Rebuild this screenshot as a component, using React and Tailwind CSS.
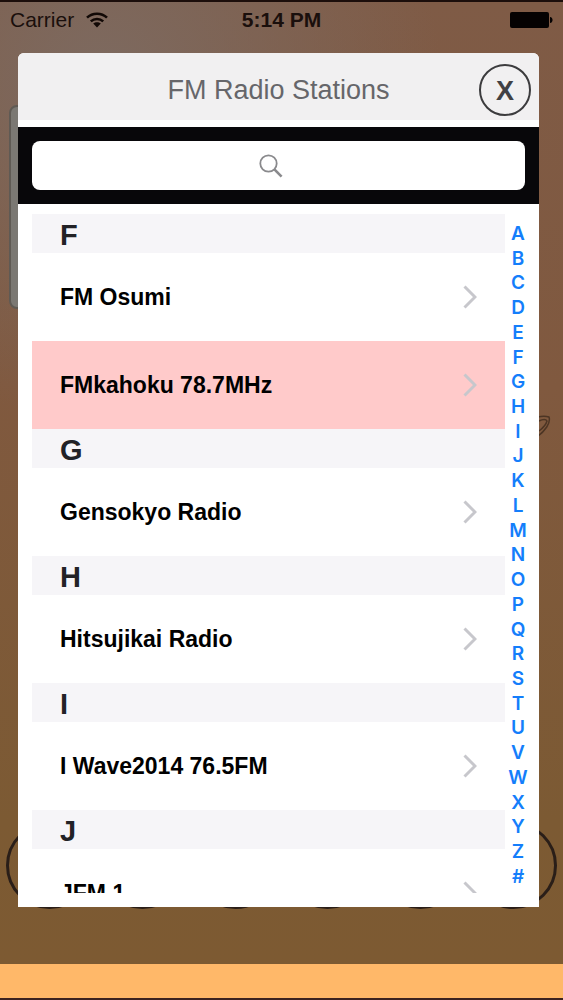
import React from "react";

const sections = [
  { letter: "F", stations: ["FM Osumi", "FMkahoku 78.7MHz"] },
  { letter: "G", stations: ["Gensokyo Radio"] },
  { letter: "H", stations: ["Hitsujikai Radio"] },
  { letter: "I", stations: ["I Wave2014 76.5FM"] },
  { letter: "J", stations: ["JFM 1"] },
];

const selected = "FMkahoku 78.7MHz";
const index = [..."ABCDEFGHIJKLMNOPQRSTUVWXYZ#"];

function StatusBar() {
  return (
    <div className="grid h-9 shrink-0 grid-cols-3 items-center pr-2.5 pl-2.5 text-[21px] leading-6 text-[#1a0f0c]">
      <div className="flex items-center gap-3">
        <span>Carrier</span>
        <svg viewBox="0 0 22 16" className="h-4 w-[22px]" aria-label="Wi-Fi">
          <g fill="none" stroke="#120906" strokeWidth="2.6">
            <path d="M1 5.6C6.5 0.4 15.5 0.4 21 5.6" />
            <path d="M4.8 9.4C8.2 6.2 13.8 6.2 17.2 9.4" />
          </g>
          <path d="M7.2 11.6C9.4 9.7 12.6 9.7 14.8 11.6L11 15.6Z" fill="#120906" />
        </svg>
      </div>
      <span className="text-center font-bold whitespace-nowrap">5:14 PM</span>
      <svg viewBox="0 0 44 18" className="h-[18px] w-11 justify-self-end" aria-label="Battery full">
        <rect x="1" y="1" width="39" height="16" rx="2" fill="#050202" />
        <path d="M41 6C44.4 6.4 44.4 11.6 41 12Z" fill="#050202" />
      </svg>
    </div>
  );
}

function Backdrop() {
  return (
    <div className="col-start-1 row-start-1 flex min-h-0 flex-col pt-[103px]" aria-hidden="true">
      <div className="mr-8 ml-[9px] h-[204px] shrink-0 rounded-lg border-2 border-[#5f5a54] bg-[#7b7873]" />
      <svg viewBox="0 0 30 26" className="mt-[104px] mr-3 h-[26px] w-[30px] shrink-0 self-end">
        <path
          d="M4 10C12 4 22 2 28 4C30 10 24 18 16 24M18 8C22 6 25 6 26 8C25 12 22 15 18 18"
          fill="none"
          stroke="#4c3524"
          strokeWidth="1.5"
        />
      </svg>
      <div className="mt-auto mb-[55px] flex justify-between px-[6px]">
        {[0, 1, 2, 3, 4, 5].map((n) => (
          <div key={n} className="size-[87px] shrink-0 rounded-full border-3 border-[#2a1e18]" />
        ))}
      </div>
    </div>
  );
}

function Chevron() {
  return (
    <svg viewBox="0 0 14 24" className="h-6 w-3.5 shrink-0" aria-hidden="true">
      <path d="M1.5 1.5L12 12L1.5 22.5" fill="none" stroke="#c7c7cc" strokeWidth="3" />
    </svg>
  );
}

function StationList() {
  return (
    <div id="stations" className="min-w-0 flex-1 overflow-y-auto [scrollbar-width:none]">
      {sections.map(({ letter, stations }) => (
        <section key={letter}>
          <h2 className="flex h-[39px] items-center bg-[#f6f5f8] pt-0.5 pl-7 text-[29px] leading-8 font-bold text-[#222226]">
            {letter}
          </h2>
          {stations.map((name) => (
            <button
              key={name}
              type="button"
              className={
                name === selected
                  ? "flex h-[88px] w-full items-center justify-between bg-[#ffcaca] px-7 text-left text-[23px] font-bold text-black"
                  : "flex h-[88px] w-full items-center justify-between bg-white px-7 text-left text-[23px] font-bold text-black"
              }
            >
              <span>{name}</span>
              <Chevron />
            </button>
          ))}
        </section>
      ))}
    </div>
  );
}

function StationDialog() {
  return (
    <div
      role="dialog"
      aria-labelledby="dialog-title"
      className="flex min-h-0 flex-1 flex-col overflow-hidden rounded-t-md bg-white"
    >
      <header className="grid h-[67px] shrink-0 grid-cols-[52px_1fr_52px] items-center bg-[#f1f0f1] px-2 pt-1.5">
        <h1 id="dialog-title" className="col-start-2 text-center text-[27px] leading-8 whitespace-nowrap text-[#66666a]">
          FM Radio Stations
        </h1>
        <button
          type="button"
          aria-label="Close"
          className="flex size-[52px] items-center justify-center rounded-full border-2 border-[#3c3c3e] pt-0.5 text-[27px] leading-8 font-bold text-[#414144]"
        >
          X
        </button>
      </header>
      <div className="mt-[7px] shrink-0 bg-[#08070a] p-3.5">
        <label className="grid h-[49px] items-center rounded-lg bg-white">
          <input
            type="search"
            aria-label="Search stations"
            className="col-start-1 row-start-1 h-full w-full rounded-lg bg-transparent px-3 text-[23px] outline-none"
          />
          <svg viewBox="0 0 24 24" className="col-start-1 row-start-1 mr-4 size-6 justify-self-center" aria-hidden="true">
            <g fill="none" stroke="#8a8a8d">
              <circle cx="9.5" cy="9.5" r="8.2" strokeWidth="1.8" />
              <path d="M15.4 15.4L22.6 22.6" strokeWidth="2.6" />
            </g>
          </svg>
        </label>
      </div>
      <div className="flex min-h-0 flex-1 px-3.5 pt-2.5 pb-3.5">
        <StationList />
        <nav
          aria-label="Jump to letter"
          className="flex w-5 shrink-0 flex-col justify-between pt-2 pb-1 font-['Inter','Liberation_Sans',sans-serif]"
        >
          {index.map((letter) => (
            <a
              key={letter}
              href="#stations"
              className="flex w-[26px] justify-center text-[19px] leading-6 font-semibold text-[#147efb]"
            >
              {letter}
            </a>
          ))}
        </nav>
      </div>
    </div>
  );
}

export default function App() {
  return (
    <div className="flex h-screen flex-col border-t-2 border-b-2 border-t-[#1c0e0b] border-b-[#3c2320] bg-[#ffb869] font-['Liberation_Sans',Arial,sans-serif]">
      <div className="grid min-h-0 flex-1 grid-cols-1 grid-rows-[minmax(0,1fr)] bg-[radial-gradient(circle_at_18%_8%,#7d6a60_0%,transparent_34%),linear-gradient(to_bottom,#7f5b46_0%,#80593f_40%,#7c5a33_85%,#7d5a32_100%)]">
        <Backdrop />
        <main className="z-10 col-start-1 row-start-1 flex min-h-0 flex-col">
          <StatusBar />
          <div className="flex min-h-0 flex-1 flex-col pt-[15px] pr-6 pb-[57px] pl-[18px]">
            <StationDialog />
          </div>
        </main>
      </div>
      <div className="h-[34px] shrink-0" />
    </div>
  );
}
